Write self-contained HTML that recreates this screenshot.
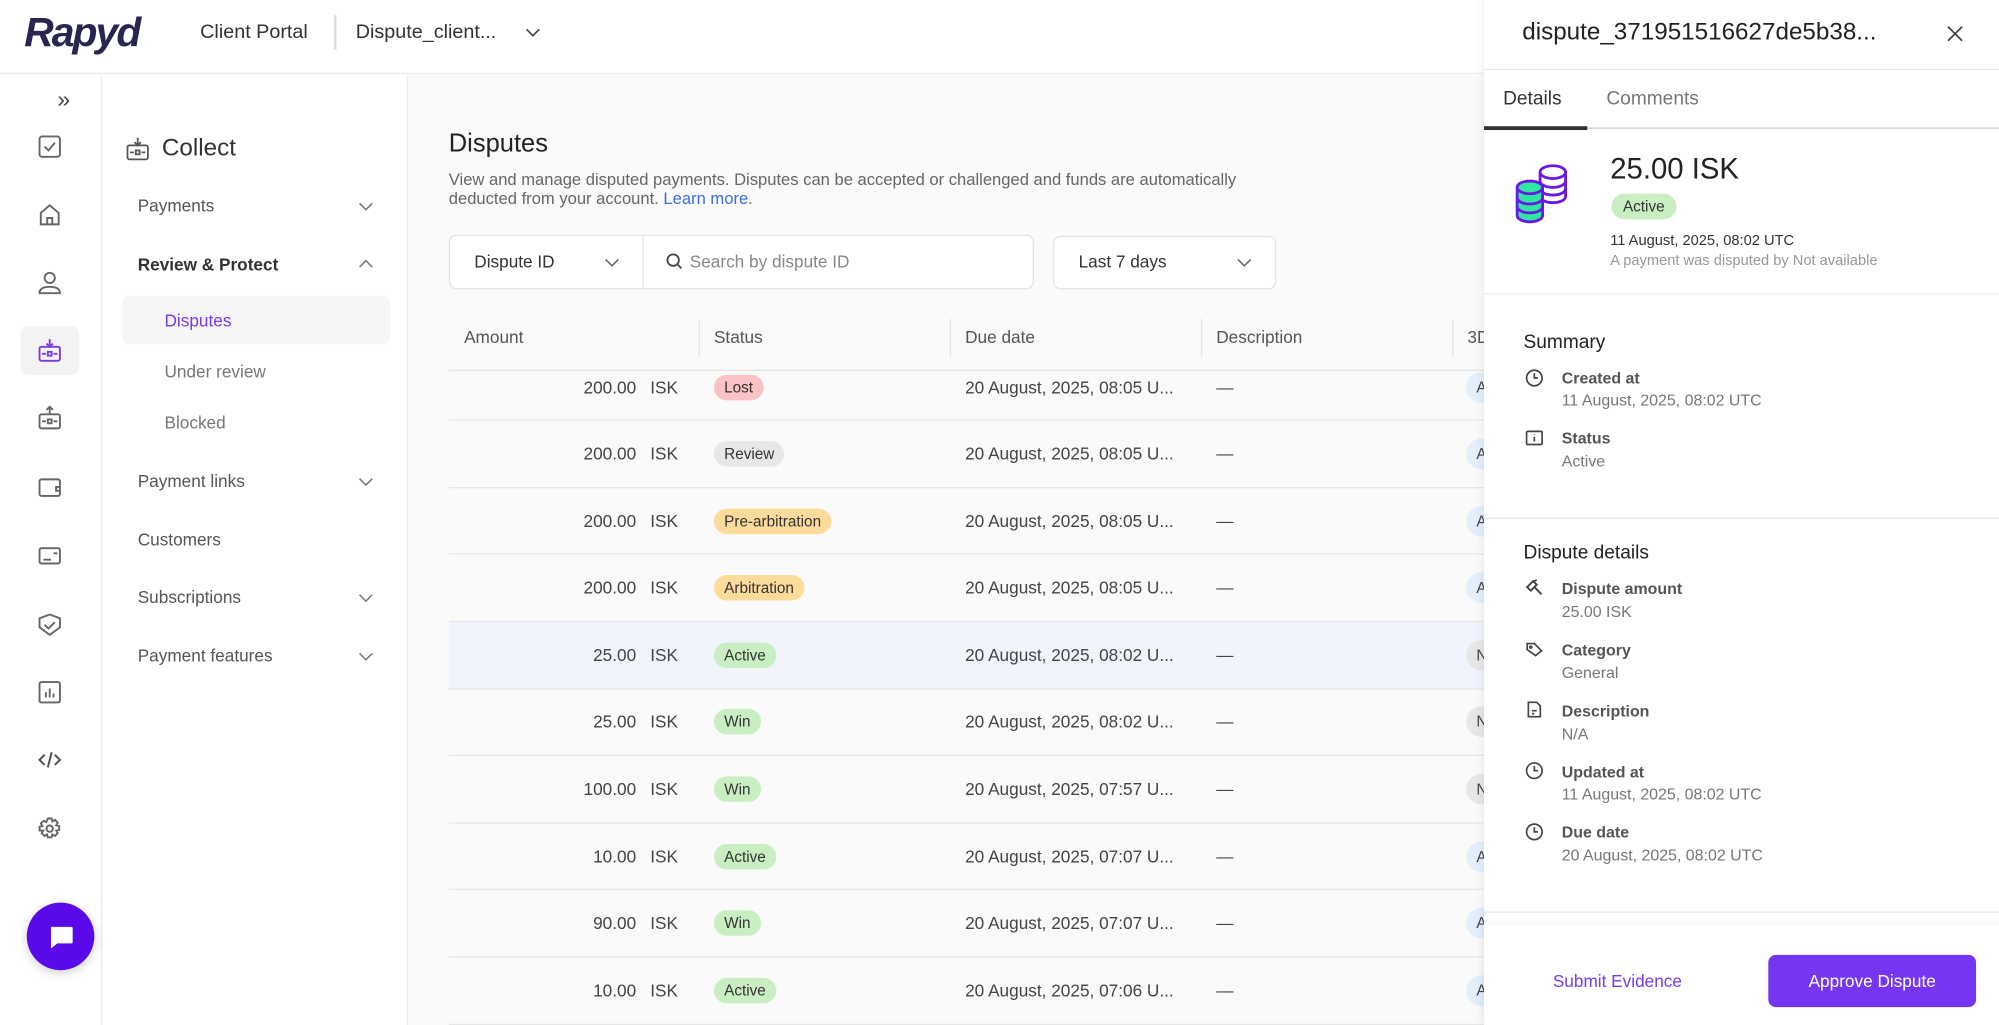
<!DOCTYPE html>
<html><head><meta charset="utf-8"><style>
*{margin:0;padding:0;box-sizing:border-box}
html,body{width:1999px;height:1025px;overflow:hidden;background:#fafafa}
#w{position:absolute;left:0;top:0;width:1568px;height:804px;transform:scale(1.2749);transform-origin:0 0;font-family:"Liberation Sans",Arial,sans-serif;color:#2b2b2b;background:#fafafa;overflow:hidden}
.a{position:absolute}
.ic{position:absolute;left:29px;width:20px;height:20px}
.nav{position:absolute;left:108px;font-size:13.5px;color:#555}
.chev{position:absolute;left:281px;width:12px;height:8px}
.row{position:absolute;left:0;width:812px;height:52.6px;border-bottom:1px solid #e6e6e6;font-size:13.5px;color:#444}
.row span{position:absolute;top:50%;transform:translateY(-50%);white-space:nowrap}
.amt{right:665px;text-align:right}
.isk{left:158px}
.bd{left:208px;padding:3px 8px;border-radius:11px;font-size:12px;color:#333}
.dt{left:405px}
.ds{left:602px}
.d3{left:798px;width:30px;height:24px;border-radius:12px;font-size:12px;padding:5px 0 0 8px}
.lbl{position:absolute;left:1225px;font-size:12.5px;font-weight:bold;color:#555}
.val{position:absolute;left:1225px;font-size:12.5px;color:#777}
.si{position:absolute;left:1196px;width:15px;height:15px}
</style></head><body><div id="w">
<!-- header -->
<div class="a" style="left:0;top:0;width:1164px;height:58px;background:#fff;border-bottom:1px solid #eee"></div>
<div class="a" style="left:19px;top:7px;font-size:32px;font-weight:bold;font-style:italic;color:#262650;letter-spacing:-1.5px">Rapyd</div>
<div class="a" style="left:157px;top:17px;font-size:15.5px;color:#333">Client Portal</div>
<div class="a" style="left:262px;top:12px;width:2px;height:27px;background:#ddd"></div>
<div class="a" style="left:279px;top:17px;font-size:15.5px;color:#333">Dispute_client...</div>
<svg class="a" style="left:412px;top:20px" width="12" height="10" viewBox="0 0 12 10"><path d="M1 3l5 5 5-5" fill="none" stroke="#444" stroke-width="1.3"/></svg>
<!-- rail -->
<div class="a" style="left:0;top:59px;width:80px;height:745px;background:#fff;border-right:1px solid #ececec"></div>
<div class="a" style="left:45px;top:68px;font-size:18px;color:#444">»</div>
<svg class="ic" style="top:105px" viewBox="0 0 20 20" fill="none" stroke="#666" stroke-width="1.5"><rect x="2" y="2" width="16" height="16" rx="2"/><path d="M6 10l3 3 5-6"/></svg>
<svg class="ic" style="top:158px" viewBox="0 0 20 20" fill="none" stroke="#666" stroke-width="1.5"><path d="M3 18V9l7-6 7 6v9zM8 18v-5h4v5"/></svg>
<svg class="ic" style="top:212px" viewBox="0 0 20 20" fill="none" stroke="#666" stroke-width="1.5"><circle cx="10" cy="6" r="4"/><path d="M2 18c0-4 4-5 8-5s8 1 8 5z"/></svg>
<div class="a" style="left:16px;top:256px;width:46px;height:38px;background:#f3f3f3;border-radius:6px"></div>
<svg class="ic" style="top:265px" viewBox="0 0 20 20" fill="none" stroke="#7c3aed" stroke-width="1.5"><rect x="2" y="7" width="16" height="11" rx="1.5"/><path d="M10 1v6M7.5 4.5L10 7l2.5-2.5M4 12.5h3M13 12.5h3"/><rect x="8.5" y="11" width="3" height="3"/></svg>
<svg class="ic" style="top:318px" viewBox="0 0 20 20" fill="none" stroke="#666" stroke-width="1.5"><rect x="2" y="7" width="16" height="11" rx="1.5"/><path d="M10 7V1M7.5 3.5L10 1l2.5 2.5M4 12.5h3M13 12.5h3"/><rect x="8.5" y="11" width="3" height="3"/></svg>
<svg class="ic" style="top:372px" viewBox="0 0 20 20" fill="none" stroke="#666" stroke-width="1.5"><rect x="2" y="4" width="16" height="13" rx="1.5"/><path d="M18 10h-3v3h3"/></svg>
<svg class="ic" style="top:426px" viewBox="0 0 20 20" fill="none" stroke="#666" stroke-width="1.5"><rect x="2" y="4" width="16" height="12" rx="1.5"/><path d="M5 13h6M13 8h3"/></svg>
<svg class="ic" style="top:480px" viewBox="0 0 20 20" fill="none" stroke="#666" stroke-width="1.5"><path d="M10 2l8 3v7l-8 6-8-6V5z"/><path d="M6 10l3 3 5-5"/></svg>
<svg class="ic" style="top:533px" viewBox="0 0 20 20" fill="none" stroke="#666" stroke-width="1.5"><rect x="2" y="2" width="16" height="16" rx="1.5"/><path d="M7 14v-4M10 14V7M13 14v-3"/></svg>
<svg class="ic" style="top:586px" viewBox="0 0 20 20" fill="none" stroke="#555" stroke-width="1.6"><path d="M6 6l-4 4 4 4M14 6l4 4-4 4M11.5 4l-3 12"/></svg>
<svg class="ic" style="top:640px" viewBox="0 0 20 20" fill="none" stroke="#666" stroke-width="1.5"><circle cx="10" cy="10" r="2.5"/><path d="M8.5 2h3l.6 2.3 2-1.2 2.2 2.2-1.2 2 2.3.6v3l-2.3.6 1.2 2-2.2 2.2-2-1.2-.6 2.3h-3l-.6-2.3-2 1.2-2.2-2.2 1.2-2L2 11.5v-3l2.3-.6-1.2-2 2.2-2.2 2 1.2z"/></svg>
<div class="a" style="left:21px;top:708px;width:53px;height:53px;border-radius:50%;background:#5a0ae8;box-shadow:0 2px 8px rgba(0,0,0,.2)"></div>
<svg class="a" style="left:37px;top:724px" width="22" height="22" viewBox="0 0 22 22"><path d="M3 3h16a1 1 0 0 1 1 1v11a1 1 0 0 1-1 1H8l-5 4z" fill="#fff"/></svg>
<!-- nav -->
<div class="a" style="left:81px;top:59px;width:239px;height:745px;background:#fff;border-right:1px solid #ececec"></div>
<svg class="a" style="left:98px;top:107px" width="20" height="20" viewBox="0 0 20 20" fill="none" stroke="#555" stroke-width="1.4"><rect x="2" y="7" width="16" height="11" rx="1.5"/><path d="M10 1v6M7.5 4.5L10 7l2.5-2.5M4 12.5h3M13 12.5h3"/><rect x="8.5" y="11" width="3" height="3"/></svg>
<div class="a" style="left:127px;top:106px;font-size:19px;color:#333">Collect</div>
<div class="nav" style="top:154px">Payments</div>
<svg class="chev" style="top:158px" viewBox="0 0 12 8"><path d="M1 1.5l5 5 5-5" fill="none" stroke="#777" stroke-width="1.2"/></svg>
<div class="nav" style="top:200px;font-weight:bold;color:#333">Review &amp; Protect</div>
<svg class="chev" style="top:203px" viewBox="0 0 12 8"><path d="M1 6.5l5-5 5 5" fill="none" stroke="#777" stroke-width="1.2"/></svg>
<div class="a" style="left:96px;top:232px;width:210px;height:38px;background:#f6f6f6;border-radius:5px"></div>
<div class="nav" style="left:129px;top:244px;color:#7c3aed">Disputes</div>
<div class="nav" style="left:129px;top:284px;color:#777">Under review</div>
<div class="nav" style="left:129px;top:324px;color:#777">Blocked</div>
<div class="nav" style="top:370px">Payment links</div>
<svg class="chev" style="top:374px" viewBox="0 0 12 8"><path d="M1 1.5l5 5 5-5" fill="none" stroke="#777" stroke-width="1.2"/></svg>
<div class="nav" style="top:416px">Customers</div>
<div class="nav" style="top:461px">Subscriptions</div>
<svg class="chev" style="top:465px" viewBox="0 0 12 8"><path d="M1 1.5l5 5 5-5" fill="none" stroke="#777" stroke-width="1.2"/></svg>
<div class="nav" style="top:507px">Payment features</div>
<svg class="chev" style="top:511px" viewBox="0 0 12 8"><path d="M1 1.5l5 5 5-5" fill="none" stroke="#777" stroke-width="1.2"/></svg>
<!-- main -->
<div class="a" style="left:352px;top:102px;font-size:20px;color:#222">Disputes</div>
<div class="a" style="left:352px;top:134px;font-size:13px;line-height:14.5px;color:#666;width:700px">View and manage disputed payments. Disputes can be accepted or challenged and funds are automatically<br>deducted from your account. <span style="color:#3b6fe0">Learn more</span>.</div>
<div class="a" style="left:352px;top:184px;width:459px;height:43px;background:#fff;border:1px solid #e3e3e3;border-radius:6px"></div>
<div class="a" style="left:504px;top:185px;width:1px;height:41px;background:#e8e8e8"></div>
<div class="a" style="left:372px;top:198px;font-size:13.5px;color:#333">Dispute ID</div>
<svg class="a" style="left:474px;top:202px" width="12" height="8" viewBox="0 0 12 8"><path d="M1 1.5l5 5 5-5" fill="none" stroke="#666" stroke-width="1.2"/></svg>
<svg class="a" style="left:522px;top:198px" width="14" height="14" viewBox="0 0 14 14" fill="none" stroke="#444" stroke-width="1.4"><circle cx="6" cy="6" r="4.5"/><path d="M9.5 9.5l3 3"/></svg>
<div class="a" style="left:541px;top:198px;font-size:13.5px;color:#888">Search by dispute ID</div>
<div class="a" style="left:826px;top:185px;width:175px;height:42px;background:#fff;border:1px solid #e3e3e3;border-radius:6px"></div>
<div class="a" style="left:846px;top:198px;font-size:13.5px;color:#333">Last 7 days</div>
<svg class="a" style="left:970px;top:202px" width="12" height="8" viewBox="0 0 12 8"><path d="M1 1.5l5 5 5-5" fill="none" stroke="#666" stroke-width="1.2"/></svg>
<!-- table -->
<div class="a" style="left:352px;top:291px;width:812px;height:513px;overflow:hidden">
<div class="row" style="top:-13.3px"><span class="amt">200.00</span><span class="isk">ISK</span><span class="bd" style="background:#fbc3c3">Lost</span><span class="dt">20 August, 2025, 08:05 U...</span><span class="ds">—</span><span class="d3" style="background:#e3effc">A</span></div>
<div class="row" style="top:39.3px"><span class="amt">200.00</span><span class="isk">ISK</span><span class="bd" style="background:#e7e7e7">Review</span><span class="dt">20 August, 2025, 08:05 U...</span><span class="ds">—</span><span class="d3" style="background:#e3effc">A</span></div>
<div class="row" style="top:91.9px"><span class="amt">200.00</span><span class="isk">ISK</span><span class="bd" style="background:#fddb9b">Pre-arbitration</span><span class="dt">20 August, 2025, 08:05 U...</span><span class="ds">—</span><span class="d3" style="background:#e3effc">A</span></div>
<div class="row" style="top:144.5px"><span class="amt">200.00</span><span class="isk">ISK</span><span class="bd" style="background:#fddb9b">Arbitration</span><span class="dt">20 August, 2025, 08:05 U...</span><span class="ds">—</span><span class="d3" style="background:#e3effc">A</span></div>
<div class="row" style="top:197.1px;background:#f1f4fd"><span class="amt">25.00</span><span class="isk">ISK</span><span class="bd" style="background:#c9eec2">Active</span><span class="dt">20 August, 2025, 08:02 U...</span><span class="ds">—</span><span class="d3" style="background:#e7e7e7">N</span></div>
<div class="row" style="top:249.7px"><span class="amt">25.00</span><span class="isk">ISK</span><span class="bd" style="background:#c9eec2">Win</span><span class="dt">20 August, 2025, 08:02 U...</span><span class="ds">—</span><span class="d3" style="background:#e7e7e7">N</span></div>
<div class="row" style="top:302.3px"><span class="amt">100.00</span><span class="isk">ISK</span><span class="bd" style="background:#c9eec2">Win</span><span class="dt">20 August, 2025, 07:57 U...</span><span class="ds">—</span><span class="d3" style="background:#e7e7e7">N</span></div>
<div class="row" style="top:354.9px"><span class="amt">10.00</span><span class="isk">ISK</span><span class="bd" style="background:#c9eec2">Active</span><span class="dt">20 August, 2025, 07:07 U...</span><span class="ds">—</span><span class="d3" style="background:#e3effc">A</span></div>
<div class="row" style="top:407.5px"><span class="amt">90.00</span><span class="isk">ISK</span><span class="bd" style="background:#c9eec2">Win</span><span class="dt">20 August, 2025, 07:07 U...</span><span class="ds">—</span><span class="d3" style="background:#e3effc">A</span></div>
<div class="row" style="top:460.1px"><span class="amt">10.00</span><span class="isk">ISK</span><span class="bd" style="background:#c9eec2">Active</span><span class="dt">20 August, 2025, 07:06 U...</span><span class="ds">—</span><span class="d3" style="background:#e3effc">A</span></div>
</div>
<div class="a" style="left:352px;top:240px;width:812px;height:51px;background:#fafafa;border-bottom:1px solid #e3e3e3;font-size:13.5px;color:#555">
<span class="a" style="left:12px;top:17px">Amount</span>
<span class="a" style="left:196px;top:10px;width:1px;height:30px;background:#e6e6e6"></span><span class="a" style="left:208px;top:17px">Status</span>
<span class="a" style="left:393px;top:10px;width:1px;height:30px;background:#e6e6e6"></span><span class="a" style="left:405px;top:17px">Due date</span>
<span class="a" style="left:590px;top:10px;width:1px;height:30px;background:#e6e6e6"></span><span class="a" style="left:602px;top:17px">Description</span>
<span class="a" style="left:787px;top:10px;width:1px;height:30px;background:#e6e6e6"></span><span class="a" style="left:799px;top:17px">3D</span>
</div>
<!-- right panel -->
<div class="a" style="left:1164px;top:0;width:404px;height:804px;background:#fff;box-shadow:-2px 0 6px rgba(0,0,0,.06)"></div>
<div class="a" style="left:1194px;top:15px;font-size:19px;color:#222">dispute_371951516627de5b38...</div>
<svg class="a" style="left:1527px;top:20px" width="13" height="13" viewBox="0 0 13 13"><path d="M1 1l11 11M12 1L1 12" stroke="#444" stroke-width="1.4"/></svg>
<div class="a" style="left:1164px;top:54px;width:404px;height:1px;background:#e8e8e8"></div>
<div class="a" style="left:1179px;top:69px;font-size:15px;color:#333">Details</div>
<div class="a" style="left:1260px;top:69px;font-size:15px;color:#777">Comments</div>
<div class="a" style="left:1164px;top:100px;width:404px;height:1px;background:#ccc"></div>
<div class="a" style="left:1164px;top:99px;width:81px;height:3px;background:#333"></div>
<svg class="a" style="left:1188px;top:127px" width="52" height="52" viewBox="0 0 52 52" stroke="#6b16e8" stroke-width="2.2">
<path d="M20 8v19c0 3 5 5 10 5s10-2 10-5V8" fill="#fff"/><ellipse cx="30" cy="8" rx="10" ry="5" fill="#fff"/><path d="M20 15c0 3 5 5 10 5s10-2 10-5M20 21c0 3 5 5 10 5s10-2 10-5" fill="none"/>
<path d="M2 20v22c0 3 5 5 10 5s10-2 10-5V20" fill="#2ee8a0"/><ellipse cx="12" cy="20" rx="10" ry="5" fill="#2ee8a0"/><path d="M2 28c0 3 5 5 10 5s10-2 10-5M2 35c0 3 5 5 10 5s10-2 10-5" fill="none"/></svg>
<div class="a" style="left:1263px;top:119px;font-size:23px;color:#222">25.00 ISK</div>
<div class="a" style="left:1264px;top:152px;padding:3px 9px;background:#c9eec2;border-radius:11px;font-size:12px;color:#333">Active</div>
<div class="a" style="left:1263px;top:183px;font-size:11.5px;color:#333">11 August, 2025, 08:02 UTC</div>
<div class="a" style="left:1263px;top:199px;font-size:11.5px;color:#999">A payment was disputed by Not available</div>
<div class="a" style="left:1164px;top:230px;width:404px;height:1px;background:#eee"></div>
<div class="a" style="left:1195px;top:260px;font-size:15px;color:#222">Summary</div>
<svg class="si" style="top:289px" viewBox="0 0 16 16" fill="none" stroke="#444" stroke-width="1.4"><circle cx="8" cy="8" r="6.5"/><path d="M8 4v4h3"/></svg>
<div class="lbl" style="top:290px">Created at</div><div class="val" style="top:307px">11 August, 2025, 08:02 UTC</div>
<svg class="si" style="top:336px" viewBox="0 0 16 16" fill="none" stroke="#444" stroke-width="1.4"><rect x="1.5" y="2.5" width="13" height="11" rx="1"/><path d="M8 7v4M8 5v.5"/></svg>
<div class="lbl" style="top:337px">Status</div><div class="val" style="top:355px">Active</div>
<div class="a" style="left:1164px;top:406px;width:404px;height:1px;background:#e6e6e6"></div>
<div class="a" style="left:1195px;top:425px;font-size:15px;color:#222">Dispute details</div>
<svg class="si" style="top:453px" viewBox="0 0 16 16" fill="none" stroke="#444" stroke-width="1.6"><path d="M2 8l5-5 3 3-5 5zM8 8l6 6M6 4l4-2"/></svg>
<div class="lbl" style="top:455px">Dispute amount</div><div class="val" style="top:473px">25.00 ISK</div>
<svg class="si" style="top:502px" viewBox="0 0 16 16" fill="none" stroke="#444" stroke-width="1.4"><path d="M2 3h6l6 6-5 4-7-5z"/><circle cx="5" cy="6" r=".8"/></svg>
<div class="lbl" style="top:503px">Category</div><div class="val" style="top:521px">General</div>
<svg class="si" style="top:549px" viewBox="0 0 16 16" fill="none" stroke="#444" stroke-width="1.4"><path d="M3 2h7l3 3v9H3z"/><path d="M6 9h4M6 11.5h2"/></svg>
<div class="lbl" style="top:551px">Description</div><div class="val" style="top:569px">N/A</div>
<svg class="si" style="top:597px" viewBox="0 0 16 16" fill="none" stroke="#444" stroke-width="1.4"><circle cx="8" cy="8" r="6.5"/><path d="M8 4v4h3"/></svg>
<div class="lbl" style="top:599px">Updated at</div><div class="val" style="top:616px">11 August, 2025, 08:02 UTC</div>
<svg class="si" style="top:645px" viewBox="0 0 16 16" fill="none" stroke="#444" stroke-width="1.4"><circle cx="8" cy="8" r="6.5"/><path d="M8 4v4h3"/></svg>
<div class="lbl" style="top:646px">Due date</div><div class="val" style="top:664px">20 August, 2025, 08:02 UTC</div>
<div class="a" style="left:1164px;top:715px;width:404px;height:1px;background:#e6e6e6"></div>
<div class="a" style="left:1164px;top:726px;width:404px;height:78px;background:#fff;box-shadow:0 -3px 6px rgba(0,0,0,.04)"></div>
<div class="a" style="left:1218px;top:762px;font-size:13.5px;color:#7c3aed">Submit Evidence</div>
<div class="a" style="left:1387px;top:749px;width:163px;height:41px;background:#7436f0;border-radius:6px;color:#fff;font-size:13.5px;text-align:center;line-height:41px">Approve Dispute</div>
</div></body></html>
